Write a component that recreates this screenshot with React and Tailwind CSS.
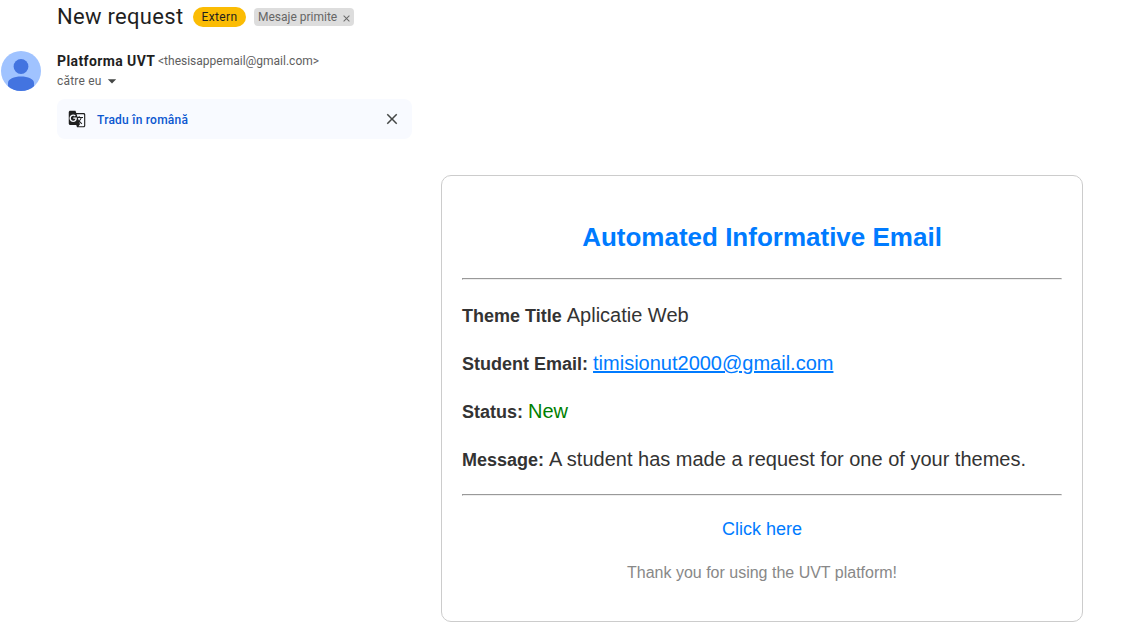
import { MdGTranslate, MdClose, MdArrowDropDown } from "react-icons/md";

function Avatar() {
  return (
    <svg viewBox="0 0 40 40" className="ml-px h-10 w-10 shrink-0">
      <defs>
        <clipPath id="avatar-clip">
          <circle cx="20" cy="20" r="20" />
        </clipPath>
      </defs>
      <circle cx="20" cy="20" r="20" fill="#a0c3ff" />
      <g clipPath="url(#avatar-clip)" fill="#4374e0">
        <circle cx="20" cy="15.5" r="7.4" />
        <path d="M7 40v-8c0-4 6-6.5 13-6.5S33 28 33 32v8z" />
      </g>
    </svg>
  );
}

function Field({ label, children }) {
  return (
    <p className="mt-5 h-7 text-xl leading-7 whitespace-nowrap text-[#333333]">
      <strong className="text-lg leading-7 font-bold">{label} </strong>
      {children}
    </p>
  );
}

function Rule() {
  return <hr className="h-0.5 border border-t-[#999999] border-r-[#eeeeee] border-b-[#eeeeee] border-l-[#999999]" />;
}

export default function App() {
  return (
    <main className="h-[636px] w-[1140px] overflow-hidden bg-white font-['Roboto',sans-serif] text-[#1f1f1f]">
      <header className="flex h-[34px] items-center pl-[57px] whitespace-nowrap">
        <h1 className="w-[136px] text-[22px] leading-7 tracking-[0.3px]">New request</h1>
        <span className="flex h-5 w-[53px] items-center justify-center rounded-full bg-[#fbbc04] text-xs tracking-[0.35px]">
          Extern
        </span>
        <span className="ml-2 flex h-[18px] w-[100px] items-center rounded bg-[#dddddd] pl-1 text-xs text-[#666666]">
          <span className="w-[83px]">Mesaje primite</span>
          <MdClose className="mt-0.5 h-[11px] w-[11px]" />
        </span>
      </header>

      <section className="mt-[17px] flex h-12">
        <Avatar />
        <div className="ml-4 whitespace-nowrap">
          <div className="flex h-5 items-center">
            <strong className="w-[101px] text-sm font-bold tracking-[0.4px]">Platforma UVT</strong>
            <span className="text-xs text-[#5e5e5e]">&lt;thesisappemail@gmail.com&gt;</span>
          </div>
          <div className="flex h-5 items-center text-xs text-[#5e5e5e]">
            <span className="w-[45px] tracking-[0.2px]">către eu</span>
            <MdArrowDropDown className="h-5 w-5 text-[#444746]" />
          </div>
        </div>
      </section>

      <section className="ml-[57px] flex h-10 w-[355px] items-center rounded-lg bg-[#f8faff] pr-[11px] pl-[11px]">
        <MdGTranslate className="h-[18px] w-[18px]" />
        <span className="mt-px ml-[11px] text-xs font-medium tracking-[0.24px] text-[#0b57d0]">Tradu în română</span>
        <MdClose className="ml-auto h-[18px] w-[18px] text-[#444746]" />
      </section>

      <article className="mt-9 ml-[441px] h-[447px] w-[642px] rounded-[10px] border border-[#cccccc] px-5 font-['Liberation_Sans',sans-serif]">
        <h2 className="mt-[46px] text-center text-[26px] leading-[30px] font-bold text-[#007bff]">
          Automated Informative Email
        </h2>
        <div className="mt-[26px]">
          <Rule />
        </div>
        <div className="-mt-px pt-0.5">
          <Field label="Theme Title">Aplicatie Web</Field>
          <Field label="Student Email:">
            <a className="text-[#007bff] underline">timisionut2000@gmail.com</a>
          </Field>
          <Field label="Status:">
            <span className="text-[#008000]">New</span>
          </Field>
          <Field label="Message:">A student has made a request for one of your themes.</Field>
        </div>
        <div className="mt-[21px]">
          <Rule />
        </div>
        <p className="mt-[21px] text-center text-lg leading-6 text-[#007bff]">Click here</p>
        <p className="mt-5 text-center text-base leading-6 text-[#888888]">Thank you for using the UVT platform!</p>
      </article>
    </main>
  );
}
